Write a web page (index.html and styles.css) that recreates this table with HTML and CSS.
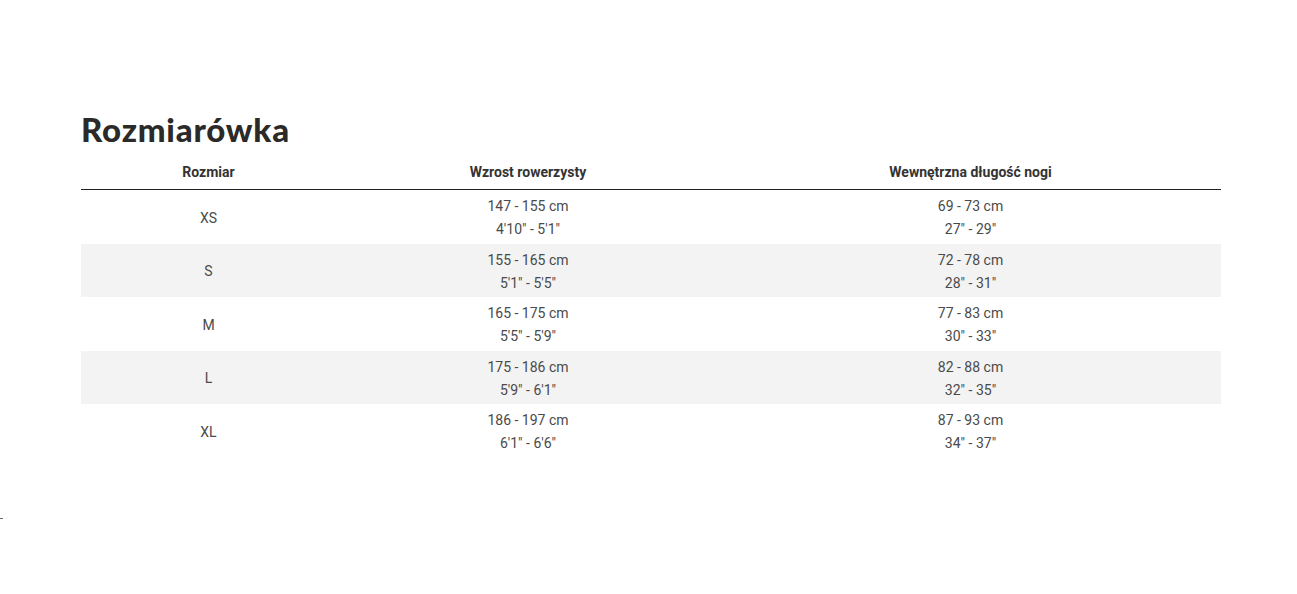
FILE: index.html
```html
<!DOCTYPE html>
<html lang="pl">
<head>
<meta charset="utf-8">
<title>Rozmiarówka</title>
<link rel="stylesheet" href="styles.css">
</head>
<body>
<div class="page">
  <h2 class="title">Rozmiarówka</h2>
  <table class="sizes">
    <colgroup>
      <col class="c1"><col class="c2"><col class="c3">
    </colgroup>
    <thead>
      <tr><th>Rozmiar</th><th>Wzrost rowerzysty</th><th>Wewnętrzna długość nogi</th></tr>
    </thead>
    <tbody>
      <tr><td>XS</td><td>147 - 155 cm<br>4'10" - 5'1"</td><td>69 - 73 cm<br>27" - 29"</td></tr>
      <tr><td>S</td><td>155 - 165 cm<br>5'1" - 5'5"</td><td>72 - 78 cm<br>28" - 31"</td></tr>
      <tr><td>M</td><td>165 - 175 cm<br>5'5" - 5'9"</td><td>77 - 83 cm<br>30" - 33"</td></tr>
      <tr><td>L</td><td>175 - 186 cm<br>5'9" - 6'1"</td><td>82 - 88 cm<br>32" - 35"</td></tr>
      <tr><td>XL</td><td>186 - 197 cm<br>6'1" - 6'6"</td><td>87 - 93 cm<br>34" - 37"</td></tr>
    </tbody>
  </table>
</div>
<span class="tick"></span>
</body>
</html>
```
FILE: styles.css
```css
html, body {
  margin: 0;
  padding: 0;
  background: #fff;
}
body {
  font-family: Roboto, "Liberation Sans", Arial, sans-serif;
  color: #333;
}
.page {
  padding: 109px 0 0 81px;
  width: 1140px;
}
.title {
  margin: 0 0 4px 0;
  font-family: Lato, "Liberation Sans", sans-serif;
  font-weight: 900;
  font-size: 33px;
  line-height: 40px;
  color: #2b2a28;
  letter-spacing: 0.8px;
}
.sizes {
  width: 1140px;
  border-collapse: collapse;
  table-layout: fixed;
  font-size: 14px;
}
.c1 { width: 255px; }
.c2 { width: 384px; }
.c3 { width: 501px; }
.sizes th {
  font-weight: 700;
  line-height: 20px;
  padding: 9px 0 7px;
  border-bottom: 1px solid #222;
  color: #333;
  text-align: center;
}
.sizes td {
  padding: 5px 0 2.5px;
  line-height: 23px;
  text-align: center;
  color: #4a4a4a;
}
.sizes tbody tr:nth-child(even) td {
  background: #f3f3f3;
}
.tick {
  position: absolute;
  left: 0;
  top: 518px;
  width: 3px;
  height: 1px;
  background: #666;
}
```
